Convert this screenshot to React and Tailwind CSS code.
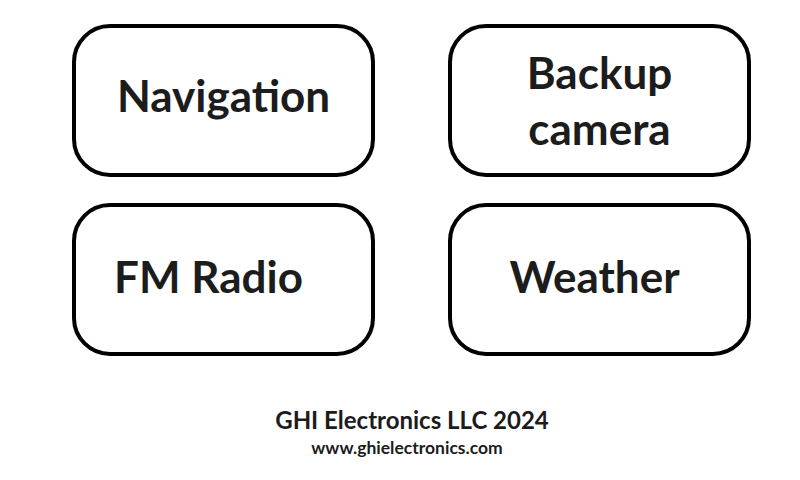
export default function App() {
  const box = "flex items-center justify-center rounded-[38px] border-4 border-black bg-white text-[#1c1c1c] text-[44px]";
  return (
    <div className="w-[800px] h-[480px] bg-white font-['Lato','Open_Sans',sans-serif] font-bold">
      <div className="grid grid-cols-[303px_303px] grid-rows-[153px_153px] gap-x-[73px] gap-y-[26px] pl-[72px] pt-[24px]">
        <div className={`${box} pb-[12px]`}>Navigation</div>
        <div className={`${box} flex-col leading-[56px] pb-[2px]`}>
          <span>Backup</span>
          <span>camera</span>
        </div>
        <div className={`${box} pr-[30px] pb-[8px]`}>FM Radio</div>
        <div className={`${box} pr-[10px] pb-[8px]`}>Weather</div>
      </div>
      <div className="flex flex-col items-center mt-[49px] pl-[24px] text-[#1c1c1c]">
        <div className="text-[24px] leading-[30px]">GHI Electronics LLC 2024</div>
        <div className="text-[17.5px] leading-[24px] pr-[10px] pt-[1px]">www.ghielectronics.com</div>
      </div>
    </div>
  );
}
